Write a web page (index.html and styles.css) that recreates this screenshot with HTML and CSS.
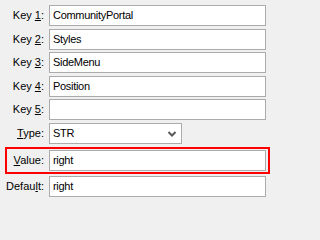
FILE: index.html
```html
<!DOCTYPE html>
<html>
<head>
<meta charset="utf-8">
<link rel="stylesheet" href="styles.css">
</head>
<body>
<div class="form">
  <div class="row"><label class="lbl">Key <u>1</u>:</label><div class="field">CommunityPortal</div></div>
  <div class="row"><label class="lbl">Key <u>2</u>:</label><div class="field">Styles</div></div>
  <div class="row"><label class="lbl">Key <u>3</u>:</label><div class="field">SideMenu</div></div>
  <div class="row"><label class="lbl">Key <u>4</u>:</label><div class="field">Position</div></div>
  <div class="row"><label class="lbl">Key <u>5</u>:</label><div class="field"></div></div>
  <div class="row"><label class="lbl"><u>T</u>ype:</label>
    <div class="field select"><span>STR</span>
      <svg class="chev" width="8" height="6" viewBox="0 0 8 6"><path d="M0.5 1 L4 4.5 L7.5 1" fill="none" stroke="#5a5a5a" stroke-width="2"/></svg>
    </div>
  </div>
  <div class="row highlight"><label class="lbl"><u>V</u>alue:</label><div class="field">right</div></div>
  <div class="row last"><label class="lbl">Defau<u>l</u>t:</label><div class="field">right</div></div>
</div>
</body>
</html>
```

FILE: styles.css
```css
html, body {
  margin: 0;
  padding: 0;
  background: #f0f0f0;
}
body {
  width: 271px;
  height: 202px;
  overflow: hidden;
  font-family: "Liberation Sans", Arial, sans-serif;
  font-size: 11px;
  color: #000;
}
.form {
  display: flex;
  flex-direction: column;
  padding-top: 5px;
}
.row {
  display: grid;
  grid-template-columns: 49px 217px;
  height: 21px;
  margin-bottom: 2.6px;
}
.lbl {
  text-align: right;
  padding-right: 5px;
  line-height: 21px;
  white-space: nowrap;
}
.field {
  box-sizing: border-box;
  height: 21px;
  border: 1px solid #ababab;
  background: #fff;
  padding-left: 3px;
  line-height: 19px;
  color: #000;
  letter-spacing: -0.3px;
  white-space: nowrap;
  overflow: hidden;
}
.select {
  width: 133px;
  display: flex;
  justify-content: space-between;
  align-items: center;
  padding-right: 5px;
}
.chev {
  display: block;
  margin-top: 1px;
}
.highlight {
  margin-top: 0.4px;
  margin-left: 5px;
  width: 265px;
  height: 27px;
  box-sizing: border-box;
  border: 2px solid #ff0000;
  padding: 1px 2px 1px 0;
  grid-template-columns: 42px 217px;
  margin-bottom: 2px;
}
.last {
  margin-bottom: 0;
}
```
